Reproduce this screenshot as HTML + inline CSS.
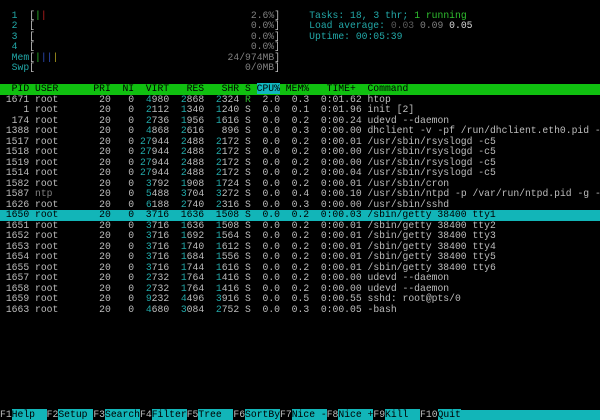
<!DOCTYPE html>
<html><head><meta charset="utf-8"><style>
html,body{margin:0;padding:0;background:#000;width:600px;height:420px;overflow:hidden}
pre{margin:0;font-family:"Liberation Mono",monospace;font-size:9.72px;line-height:10.5px;color:#bdbdbd;white-space:pre}
.l{display:block;height:10.5px;width:600px}
.c{color:#22a8a8}.g{color:#2fbf2f}.r{color:#c02020}.b{color:#3050c0}.y{color:#b0a020}.d{color:#5a5a5a}.w{color:#d8d8d8}.n{color:#808080}
.hd{background:#10c010;color:#000}
.cp{background:#10b8c0}
.sel{background:#12b5b8;color:#000}
.fk{color:#bdbdbd}.fn{background:#12b5b8;color:#000}
</style></head><body><pre><span class="l"> </span><span class="l">  <span class="c">1</span>  <b style="font-weight:normal">[</b><span class="g">|</span><span class="r">|</span>                                   <span class="n">2.6%</span>]     <span class="c">Tasks: 18, 3 thr; </span><span class="g">1 running</span></span><span class="l">  <span class="c">2</span>  [                                     <span class="n">0.0%</span>]     <span class="c">Load average: </span><span class="d">0.03 </span><span class="n">0.09 </span><span class="w">0.05</span></span><span class="l">  <span class="c">3</span>  [                                     <span class="n">0.0%</span>]     <span class="c">Uptime: 00:05:39</span></span><span class="l">  <span class="c">4</span>  [                                     <span class="n">0.0%</span>]</span><span class="l">  <span class="c">Mem</span>[<span class="g">|</span><span class="b">|</span><span class="b">|</span><span class="y">|</span>                             <span class="n">24/974MB</span>]</span><span class="l">  <span class="c">Swp</span>[                                    <span class="n">0/0MB</span>]</span><span class="l"> </span><span class="l hd">  PID USER      PRI  NI  VIRT   RES   SHR S <span class="cp">CPU%</span> MEM%   TIME+  Command</span><span class="l"> 1671 root       20   0  <span class="c">4</span>980  <span class="c">2</span>868  <span class="c">2</span>324 <span class="g">R</span>  2.0  0.3  0:01.62 htop</span><span class="l">    1 root       20   0  <span class="c">2</span>112  <span class="c">1</span>340  <span class="c">1</span>240 S  0.0  0.1  0:01.96 init [2]</span><span class="l">  174 root       20   0  <span class="c">2</span>736  <span class="c">1</span>956  <span class="c">1</span>616 S  0.0  0.2  0:00.24 udevd --daemon</span><span class="l"> 1388 root       20   0  <span class="c">4</span>868  <span class="c">2</span>616   896 S  0.0  0.3  0:00.00 dhclient -v -pf /run/dhclient.eth0.pid -</span><span class="l"> 1517 root       20   0 <span class="c">27</span>944  <span class="c">2</span>488  <span class="c">2</span>172 S  0.0  0.2  0:00.01 /usr/sbin/rsyslogd -c5</span><span class="l"> 1518 root       20   0 <span class="c">27</span>944  <span class="c">2</span>488  <span class="c">2</span>172 S  0.0  0.2  0:00.00 /usr/sbin/rsyslogd -c5</span><span class="l"> 1519 root       20   0 <span class="c">27</span>944  <span class="c">2</span>488  <span class="c">2</span>172 S  0.0  0.2  0:00.00 /usr/sbin/rsyslogd -c5</span><span class="l"> 1514 root       20   0 <span class="c">27</span>944  <span class="c">2</span>488  <span class="c">2</span>172 S  0.0  0.2  0:00.04 /usr/sbin/rsyslogd -c5</span><span class="l"> 1582 root       20   0  <span class="c">3</span>792  <span class="c">1</span>908  <span class="c">1</span>724 S  0.0  0.2  0:00.01 /usr/sbin/cron</span><span class="l"> 1587 <span class="n">ntp</span>        20   0  <span class="c">5</span>488  <span class="c">3</span>704  <span class="c">3</span>272 S  0.0  0.4  0:00.10 /usr/sbin/ntpd -p /var/run/ntpd.pid -g -</span><span class="l"> 1626 root       20   0  <span class="c">6</span>188  <span class="c">2</span>740  <span class="c">2</span>316 S  0.0  0.3  0:00.00 /usr/sbin/sshd</span><span class="l sel"> 1650 root       20   0  3716  1636  1508 S  0.0  0.2  0:00.03 /sbin/getty 38400 tty1</span><span class="l"> 1651 root       20   0  <span class="c">3</span>716  <span class="c">1</span>636  <span class="c">1</span>508 S  0.0  0.2  0:00.01 /sbin/getty 38400 tty2</span><span class="l"> 1652 root       20   0  <span class="c">3</span>716  <span class="c">1</span>692  <span class="c">1</span>564 S  0.0  0.2  0:00.01 /sbin/getty 38400 tty3</span><span class="l"> 1653 root       20   0  <span class="c">3</span>716  <span class="c">1</span>740  <span class="c">1</span>612 S  0.0  0.2  0:00.01 /sbin/getty 38400 tty4</span><span class="l"> 1654 root       20   0  <span class="c">3</span>716  <span class="c">1</span>684  <span class="c">1</span>556 S  0.0  0.2  0:00.01 /sbin/getty 38400 tty5</span><span class="l"> 1655 root       20   0  <span class="c">3</span>716  <span class="c">1</span>744  <span class="c">1</span>616 S  0.0  0.2  0:00.01 /sbin/getty 38400 tty6</span><span class="l"> 1657 root       20   0  <span class="c">2</span>732  <span class="c">1</span>764  <span class="c">1</span>416 S  0.0  0.2  0:00.00 udevd --daemon</span><span class="l"> 1658 root       20   0  <span class="c">2</span>732  <span class="c">1</span>764  <span class="c">1</span>416 S  0.0  0.2  0:00.00 udevd --daemon</span><span class="l"> 1659 root       20   0  <span class="c">9</span>232  <span class="c">4</span>496  <span class="c">3</span>916 S  0.0  0.5  0:00.55 sshd: root@pts/0</span><span class="l"> 1663 root       20   0  <span class="c">4</span>680  <span class="c">3</span>084  <span class="c">2</span>752 S  0.0  0.3  0:00.05 -bash</span><span class="l"> </span><span class="l"> </span><span class="l"> </span><span class="l"> </span><span class="l"> </span><span class="l"> </span><span class="l"> </span><span class="l"> </span><span class="l"> </span><span class="l" style="background:#12b5b8"><span style="background:#000"><span class="fk">F1</span><span class="fn">Help  </span><span class="fk">F2</span><span class="fn">Setup </span><span class="fk">F3</span><span class="fn">Search</span><span class="fk">F4</span><span class="fn">Filter</span><span class="fk">F5</span><span class="fn">Tree  </span><span class="fk">F6</span><span class="fn">SortBy</span><span class="fk">F7</span><span class="fn">Nice -</span><span class="fk">F8</span><span class="fn">Nice +</span><span class="fk">F9</span><span class="fn">Kill  </span><span class="fk">F10</span></span><span class="fn">Quit</span></span></pre></body></html>
